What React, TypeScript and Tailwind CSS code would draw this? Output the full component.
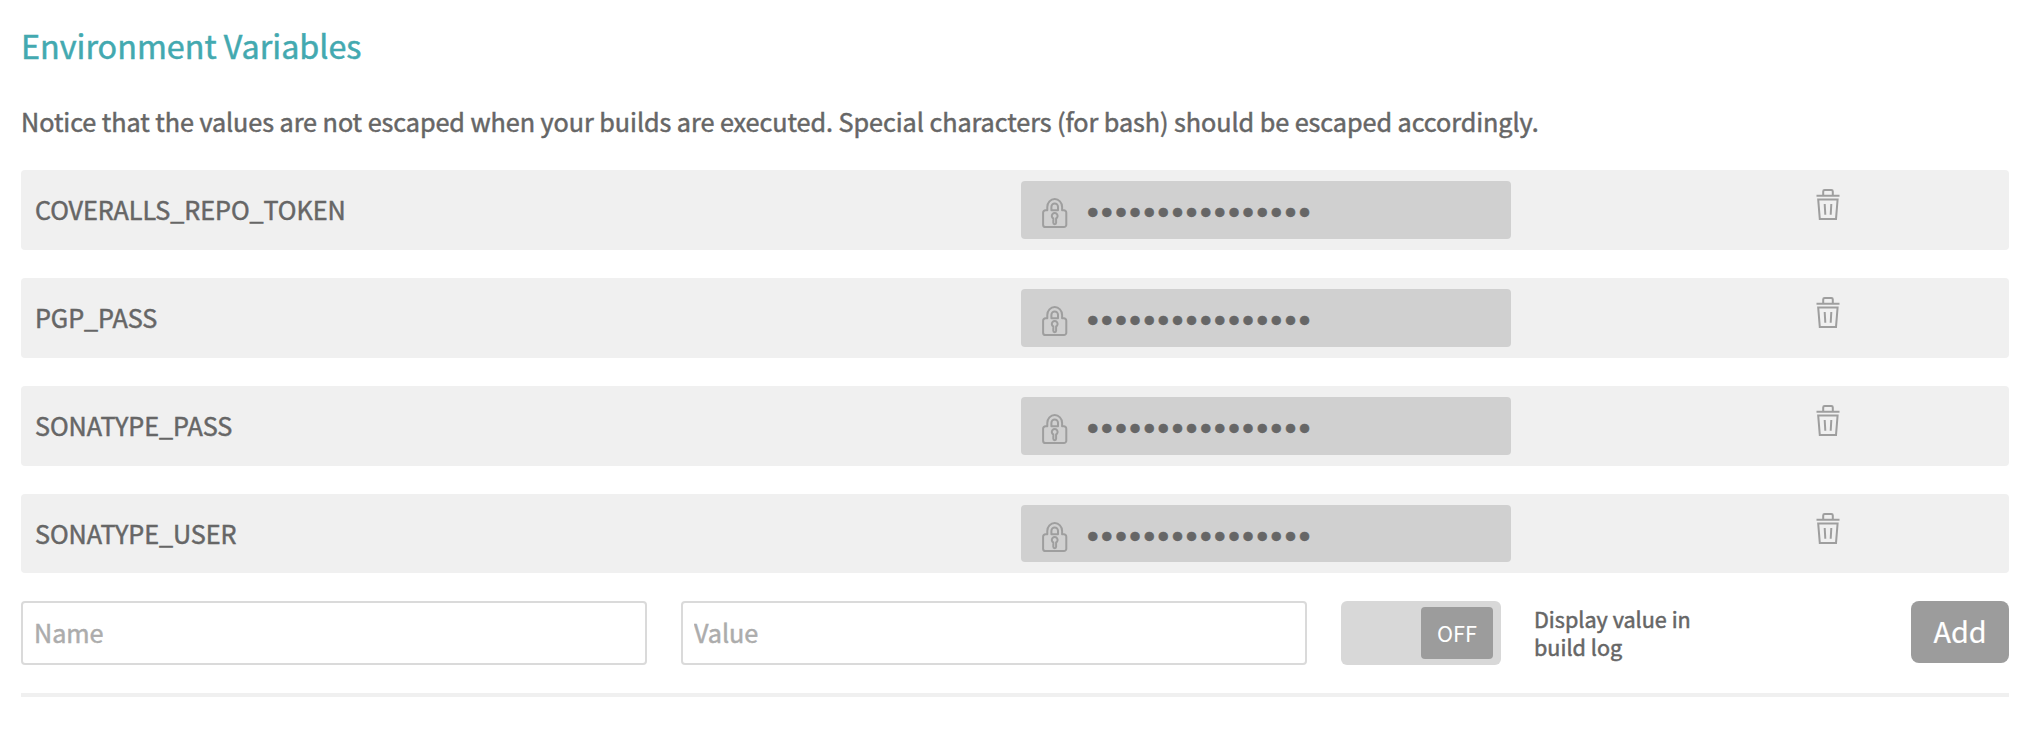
import React from "react";

const variables = ["COVERALLS_REPO_TOKEN", "PGP_PASS", "SONATYPE_PASS", "SONATYPE_USER"];

function LockIcon() {
  return (
    <svg width="26" height="31" viewBox="0 0 26 31" fill="none" stroke="#9e9e9e" strokeWidth="2" strokeLinejoin="round">
      <path d="M5.3 12.3V9a7.4 7.9 0 0 1 14.8 0v3.3h1.8a2.4 2.4 0 0 1 2.4 2.4v12a2.4 2.4 0 0 1-2.4 2.4H3.5a2.4 2.4 0 0 1-2.4-2.4v-12a2.4 2.4 0 0 1 2.4-2.4Z" />
      <path d="M9.4 12.2V8.7a3.3 3.3 0 0 1 6.6 0v3.5Z" />
      <path d="M11.3 24.8v-4.3a2.9 2.9 0 1 1 2.8 0v4.3a1.4 1.4 0 0 1-2.8 0Z" />
    </svg>
  );
}

function TrashIcon() {
  return (
    <svg width="24" height="32" viewBox="0 0 24 32" fill="none" stroke="#9e9e9e" strokeWidth="2">
      <path d="M0.5 7.700h23M7.200 7.700V3.400a1.400 1.400 0 0 1 1.400-1.400h6.800a1.400 1.400 0 0 1 1.400 1.400v4.300" />
      <path d="M2.200 11.400h19.400L20 31H3.800Z" />
      <path d="M8.700 16l.6 10.800M15.300 16l-.6 10.800" />
    </svg>
  );
}

function VariableRow({ name }: { name: string }) {
  return (
    <li className="group flex h-20 rounded-[4px] bg-[#f0f0f0] last:h-[79px]">
      <div className="w-[1000px] pl-[14px] pt-[20px] text-[25.2px] leading-[38px] tracking-[-0.07px]">{name}</div>
      <div className="mt-[11px] flex h-[58px] w-[490px] rounded-[4px] bg-[#d0d0d0] pl-[21px] pt-[17px] group-last:h-[57px]">
        <LockIcon />
        <span className="ml-[19px] mt-[-4px] font-['Liberation_Sans',sans-serif] text-[33px] leading-[38px] tracking-[2.57px]">••••••••••••••••</span>
      </div>
      <button type="button" aria-label="Delete" className="ml-[305px] mt-[18px] h-8 w-6">
        <TrashIcon />
      </button>
    </li>
  );
}

export default function App() {
  return (
    <main className="h-[734px] w-[2032px] overflow-hidden bg-white pl-[21px] pr-[23px] font-['Noto_Sans_CJK_SC',sans-serif] font-normal text-[#666] [-webkit-text-stroke-width:0.5px]">
      <h1 className="pt-[21px] text-[32.3px] leading-[48px] text-[#43a9b0]">Environment Variables</h1>
      <p className="mt-[33px] whitespace-nowrap text-[25.2px] leading-[38px] tracking-[-0.06px]">
        Notice that the values are not escaped when your builds are executed. Special characters (for bash) should be escaped accordingly.
      </p>
      <ul className="mt-[30px] flex flex-col gap-7">
        {variables.map((name) => (
          <VariableRow key={name} name={name} />
        ))}
      </ul>
      <form className="mt-7 flex h-16 items-start">
        <input
          placeholder="Name"
          className="h-16 w-[626px] rounded-[4px] border-2 border-[#dadada] px-[11px] pb-[2px] text-[25.2px] font-normal tracking-[-0.06px] placeholder:text-[#acacac]"
        />
        <input
          placeholder="Value"
          className="ml-[34px] h-16 w-[626px] rounded-[4px] border-2 border-[#dadada] px-[11px] pb-[2px] text-[25.2px] font-normal tracking-[-0.06px] placeholder:text-[#acacac]"
        />
        <div className="ml-[34px] flex h-16 w-40 justify-end rounded-[6px] bg-[#d8d8d8] pr-2 pt-[6px]">
          <span className="flex h-[52px] w-[72px] items-center justify-center rounded-[4px] bg-[#9c9c9c] text-[21.6px] font-normal text-white [-webkit-text-stroke-width:0px]">OFF</span>
        </div>
        <p className="ml-[33px] mt-[4px] w-[180px] text-[21.6px] leading-[28px]">
          Display value in
          <br />
          build log
        </p>
        <button type="button" className="ml-auto h-[62px] w-[98px] rounded-[8px] bg-[#9c9c9c] pb-[2px] text-[28.8px] font-normal leading-[60px] text-white [-webkit-text-stroke-width:0.2px]">
          Add
        </button>
      </form>
      <hr className="mt-7 h-1 border-0 bg-[#f0f0f0]" />
    </main>
  );
}
